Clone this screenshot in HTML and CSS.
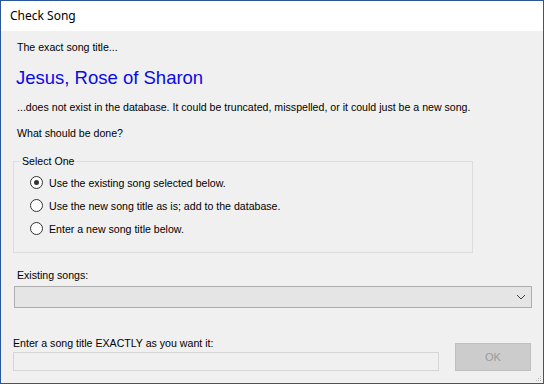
FILE: index.html
```html
<!DOCTYPE html>
<html lang="en">
<head>
    <meta charset="UTF-8">
    <meta name="viewport" content="width=device-width, initial-scale=1.0">
    <title>Check Song</title>
    <link rel="stylesheet" href="styles.css">
</head>
<body>
    <section class="window">
        <div class="title-bar">Check Song</div>
        <div class="content">
            <p class="label intro">The exact song title...</p>
            <h2 class="song-title">Jesus, Rose of Sharon</h2>
            <p class="label">...does not exist in the database. It could be truncated, misspelled, or it could just be a new song.</p>
            <p class="label question">What should be done?</p>

            <fieldset class="group">
                <legend>Select One</legend>
                <label class="option"><span class="radio checked"></span>Use the existing song selected below.</label>
                <label class="option"><span class="radio"></span>Use the new song title as is; add to the database.</label>
                <label class="option"><span class="radio"></span>Enter a new song title below.</label>
            </fieldset>

            <p class="label existing">Existing songs:</p>
            <div class="combo">
                <svg width="10" height="6" viewBox="0 0 10 6"><path d="M1 1 L5 5 L9 1" fill="none" stroke="#444" stroke-width="1"/></svg>
            </div>

            <div class="bottom-row">
                <div class="entry">
                    <p class="label">Enter a song title EXACTLY as you want it:</p>
                    <div class="text-box"></div>
                </div>
                <div class="ok-button">OK</div>
            </div>
        </div>
        <svg class="grip" width="7" height="7" viewBox="0 0 7 7">
            <rect x="5" y="1" width="1" height="1" fill="#b8b8b8"/>
            <rect x="3" y="3" width="1" height="1" fill="#b8b8b8"/>
            <rect x="5" y="3" width="1" height="1" fill="#b8b8b8"/>
            <rect x="1" y="5" width="1" height="1" fill="#b8b8b8"/>
            <rect x="3" y="5" width="1" height="1" fill="#b8b8b8"/>
            <rect x="5" y="5" width="1" height="1" fill="#b8b8b8"/>
        </svg>
    </section>
</body>
</html>
```

FILE: styles.css
```css
body {
    margin: 0;
    background: #f0f0f0;
    font-family: "Liberation Sans", Arial, sans-serif;
}
.window {
    position: relative;
    width: 542px;
    height: 382px;
    border: 1px solid #2b579a;
    background: #f0f0f0;
}
.title-bar {
    height: 30px;
    background: #fff;
    font-family: "Noto Sans", "Open Sans", sans-serif;
    font-size: 12px;
    line-height: 30px;
    padding-left: 9px;
    color: #000;
}
.content {
    padding: 0 11px 0 12px;
}
.label {
    margin: 0;
    font-size: 10.6px;
    color: #000;
    line-height: 13px;
}
.intro {
    padding: 10px 0 0 4px;
}
.song-title {
    margin: 0;
    padding: 13px 0 0 3px;
    font-size: 18.5px;
    font-weight: normal;
    color: #0a0ae6;
    line-height: 22px;
}
.intro + .song-title + .label {
    padding: 12px 0 0 4px;
}
.question {
    padding: 13px 0 0 4px;
}
.group {
    margin: 15px 0 0 0;
    width: 460px;
    height: 98px;
    box-sizing: border-box;
    border: 1px solid #dcdcdc;
    padding: 3px 0 0 16px;
}
.group legend {
    font-size: 10.6px;
    padding: 0 2px;
    margin-left: -10px;
    line-height: 13px;
}
.option {
    display: flex;
    align-items: center;
    height: 23px;
    font-size: 10.6px;
}
.radio {
    width: 11px;
    height: 11px;
    border: 1px solid #333;
    border-radius: 50%;
    background: #fff;
    margin-right: 6px;
    position: relative;
}
.radio.checked::after {
    content: "";
    position: absolute;
    left: 3px;
    top: 3px;
    width: 5px;
    height: 5px;
    border-radius: 50%;
    background: #333;
}
.existing {
    padding: 16px 0 0 4px;
}
.combo {
    margin-top: 4px;
    width: 518px;
    height: 22px;
    box-sizing: border-box;
    margin-left: 1px;
    background: #e5e5e5;
    border: 1px solid #adadad;
    display: flex;
    align-items: center;
    justify-content: flex-end;
    padding-right: 5px;
}
.bottom-row {
    display: flex;
    align-items: flex-end;
    margin-top: 29px;
}
.entry {
    width: 426px;
}
.entry .label {
    padding-bottom: 2px;
}
.text-box {
    height: 19px;
    box-sizing: border-box;
    border: 1px solid #d6d6d6;
    background: #f0f0f0;
}
.ok-button {
    margin-left: 16px;
    width: 76px;
    height: 28px;
    box-sizing: border-box;
    background: #cccccc;
    border: 1px solid #bfbfbf;
    color: #9a9a9a;
    font-size: 11px;
    display: flex;
    align-items: center;
    justify-content: center;
}
.grip {
    position: absolute;
    right: 1px;
    bottom: 1px;
}
```
